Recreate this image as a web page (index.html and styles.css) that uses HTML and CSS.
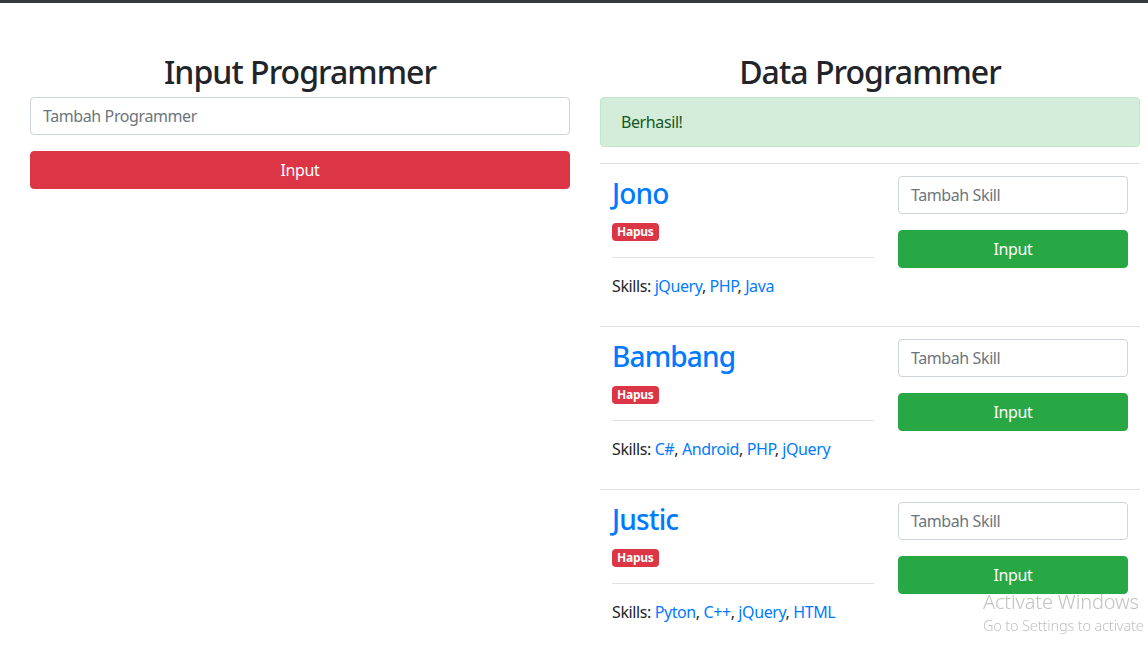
FILE: index.html
```html
<!DOCTYPE html>
<html lang="id">
<head>
<meta charset="utf-8">
<title>Programmer</title>
<link rel="stylesheet" href="styles.css">
</head>
<body>
<div class="topbar"></div>
<main class="page">
  <section class="col">
    <h2 class="title">Input Programmer</h2>
    <form class="form">
      <input class="field" type="text" placeholder="Tambah Programmer">
      <button class="btn btn-danger" type="button">Input</button>
    </form>
  </section>
  <section class="col">
    <h2 class="title">Data Programmer</h2>
    <div class="alert">Berhasil!</div>
    <ul class="list">
      <li class="item">
        <div class="info">
          <h3 class="name"><a href="#">Jono</a></h3>
          <div class="actions"><a class="badge" href="#">Hapus</a></div>
          <hr class="divider">
          <p class="skills">Skills: <a href="#">jQuery</a>, <a href="#">PHP</a>, <a href="#">Java</a></p>
        </div>
        <form class="skill-form">
          <input class="field" type="text" placeholder="Tambah Skill">
          <button class="btn btn-success" type="button">Input</button>
        </form>
      </li>
      <li class="item">
        <div class="info">
          <h3 class="name"><a href="#">Bambang</a></h3>
          <div class="actions"><a class="badge" href="#">Hapus</a></div>
          <hr class="divider">
          <p class="skills">Skills: <a href="#">C#</a>, <a href="#">Android</a>, <a href="#">PHP</a>, <a href="#">jQuery</a></p>
        </div>
        <form class="skill-form">
          <input class="field" type="text" placeholder="Tambah Skill">
          <button class="btn btn-success" type="button">Input</button>
        </form>
      </li>
      <li class="item">
        <div class="info">
          <h3 class="name"><a href="#">Justic</a></h3>
          <div class="actions"><a class="badge" href="#">Hapus</a></div>
          <hr class="divider">
          <p class="skills">Skills: <a href="#">Pyton</a>, <a href="#">C++</a>, <a href="#">jQuery</a>, <a href="#">HTML</a></p>
        </div>
        <form class="skill-form">
          <input class="field" type="text" placeholder="Tambah Skill">
          <button class="btn btn-success" type="button">Input</button>
        </form>
      </li>
    </ul>
  </section>
</main>
<div class="watermark">
  <div class="wm-title">Activate Windows</div>
  <div class="wm-sub">Go to Settings to activate</div>
</div>
</body>
</html>
```

FILE: styles.css
```css
html, body {
  margin: 0;
  height: 100%;
  overflow: hidden;
}

body {
  font-family: "Noto Sans", "Open Sans", sans-serif;
  font-size: 16px;
  line-height: 1.5;
  letter-spacing: -0.025em;
  color: #212529;
  background: #fff;
}

a {
  color: #007bff;
  text-decoration: none;
}

.topbar {
  height: 3px;
  background: #343a40;
}

.page {
  display: grid;
  grid-template-columns: 540px 540px;
  column-gap: 30px;
  padding: 48px 30px 0;
}

.title {
  margin: 0 0 6px;
  padding-top: 2px;
  font-size: 32px;
  line-height: 38px;
  font-weight: 500;
  letter-spacing: -0.03em;
  text-align: center;
}

.form,
.skill-form {
  margin: 0;
}

.field {
  display: block;
  box-sizing: border-box;
  width: 100%;
  height: 38px;
  padding: 6px 12px;
  border: 1px solid #ced4da;
  border-radius: 4px;
  font-family: inherit;
  font-size: 16px;
  line-height: 24px;
  letter-spacing: -0.025em;
  color: #495057;
  background: #fff;
}

.field::placeholder {
  color: #6c757d;
  opacity: 1;
}

.btn {
  display: block;
  box-sizing: border-box;
  width: 100%;
  height: 38px;
  margin-top: 16px;
  padding: 6px 12px;
  border: 1px solid transparent;
  border-radius: 4px;
  font-family: inherit;
  font-size: 16px;
  line-height: 24px;
  letter-spacing: -0.025em;
  color: #fff;
}

.btn-danger {
  background: #dc3545;
  border-color: #dc3545;
}

.btn-success {
  background: #28a745;
  border-color: #28a745;
}

.alert {
  padding: 12px 20px;
  margin-bottom: 16px;
  border: 1px solid #c3e6cb;
  border-radius: 4px;
  background: #d4edda;
  color: #155724;
  line-height: 24px;
}

.list {
  list-style: none;
  margin: 0;
  padding: 0;
}

.item {
  display: grid;
  grid-template-columns: 262px 230px;
  column-gap: 24px;
  padding: 12px;
  border-top: 1px solid #dfdfdf;
}

.name {
  margin: 0 0 7px;
  padding-top: 1px;
  font-size: 28px;
  line-height: 33px;
  font-weight: 500;
  letter-spacing: -0.03em;
}

.actions {
  line-height: 24px;
}

.badge {
  display: inline-block;
  padding: 3px 5px;
  font-size: 12px;
  font-weight: 700;
  line-height: 1;
  letter-spacing: -0.02em;
  color: #fff;
  background: #dc3545;
  border-radius: 4px;
  vertical-align: -1px;
}

.divider {
  margin: 16px 0;
  border: 0;
  border-top: 1px solid #e1e1e1;
}

.skills {
  margin: 0 0 16px;
}

.watermark {
  position: fixed;
  left: 983px;
  top: 589px;
  white-space: nowrap;
  color: #c2c2c2;
  letter-spacing: -0.01em;
}

.wm-title {
  font-size: 20px;
  font-weight: 300;
  line-height: 25px;
}

.wm-sub {
  font-size: 14.5px;
  font-weight: 300;
  line-height: 22px;
}
```
